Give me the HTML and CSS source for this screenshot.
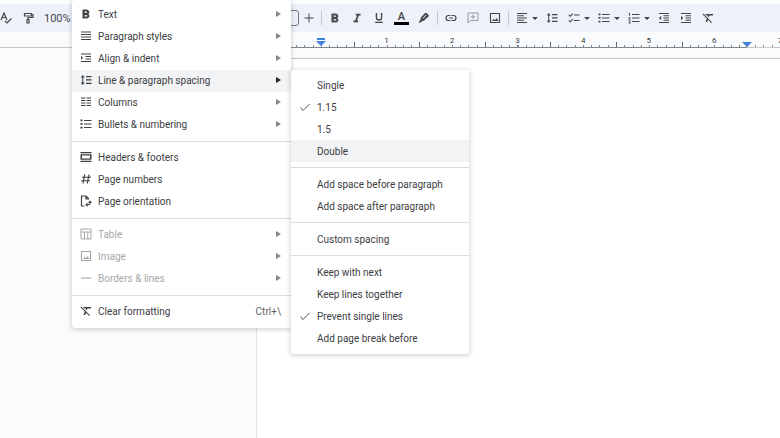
FILE: index.html
```html
<!DOCTYPE html>
<html lang="en">
<head>
  <meta charset="UTF-8" />
  <meta name="viewport" content="width=device-width, initial-scale=1.0"/>
  <title>Document editor</title>
  <link rel="stylesheet" href="styles.css">
</head>
<body>
  <!-- shared icon shapes -->
  <svg class="sprite" aria-hidden="true">
    <symbol id="bold" viewBox="2 1 20 20"><path d="M15.6 10.8c1-.7 1.6-1.8 1.6-2.8 0-2.3-1.8-4-4-4H6.500v14h7.100c2.100 0 3.700-1.700 3.700-3.800 0-1.500-.9-2.800-1.700-3.400zM9.500 6.500h3a1.500 1.500 0 0 1 0 3h-3zm3.500 9H9.500v-3H13a1.500 1.500 0 0 1 0 3z" stroke="currentColor" stroke-width=".6"/></symbol>
    <symbol id="italic" viewBox="2 1 20 20"><path d="M10 4v3h2.200l-3.400 8H6v3h8v-3h-2.200l3.400-8H18V4z"/></symbol>
    <symbol id="underline" viewBox="1 1 22 22"><path d="M12 17a6 6 0 0 0 6-6V3h-2.500v8a3.500 3.500 0 0 1-7 0V3H6v8a6 6 0 0 0 6 6zm-7 2v2h14v-2z"/></symbol>
    <symbol id="justify" viewBox="0 0 24 24"><path d="M2 3h20v2H2zm0 5h20v2H2zm0 5h20v2H2zm0 5h20v2H2z"/></symbol>
    <symbol id="left" viewBox="0 0 24 24"><path d="M2 2h20v2H2zm0 4.500h14v2H2zM2 11h20v2H2zm0 4.500h14v2H2zM2 20h20v2H2z"/></symbol>
    <symbol id="indent" viewBox="0 0 24 24"><path d="M2 3h20v2H2zm9 5h11v2H11zm0 5h11v2H11zm-9 5h20v2H2zM2 7.500v8l4-4z" /></symbol>
    <symbol id="indent-more" viewBox="0 0 24 24"><path d="M2 2h20v2H2zm9 4.500h11v2H11zm0 4.500h11v2H11zm0 4.500h11v2H11zM2 20h20v2H2zM2 7.500v9L6.500 12z"/></symbol>
    <symbol id="indent-less" viewBox="0 0 24 24"><path d="M2 2h20v2H2zm9 4.500h11v2H11zm0 4.500h11v2H11zm0 4.500h11v2H11zM2 20h20v2H2zM6.500 7.500v9L2 12z"/></symbol>
    <symbol id="spacing" viewBox="0 0 24 24"><path d="M6.500 7h3L5.500 2 1.500 7h3v10h-3l4 5 4-5h-3zM12 4v2.500h11V4zm0 16h11v-2.500H12zm0-6.800h11v-2.500H12z"/></symbol>
    <symbol id="columns" viewBox="0 0 24 24"><path d="M2 3h9v2H2zm0 5h9v2H2zm0 5h9v2H2zm0 5h9v2H2zM13 3h9v2h-9zm0 5h9v2h-9zm0 5h9v2h-9zm0 5h9v2h-9z"/></symbol>
    <symbol id="bullets" viewBox="0 0 24 24"><path d="M1 3h4v3.500H1zm0 7.200h4v3.500H1zm0 7.300h4V21H1zM8 4h15v2H8zm0 7h15v2H8zm0 7h15v2H8z"/></symbol>
    <symbol id="numbers" viewBox="0 0 24 24"><path d="M1 2h3v6H2.500V3.500H1zm0 8h4v1.500L2.800 14H5v1.500H1V14l2.200-2.500H1zm0 7h4v6H1v-1.300h2.500v-1H2v-1.300h1.500v-1H1zM8 4h15v2H8zm0 7h15v2H8zm0 7h15v2H8z"/></symbol>
    <symbol id="checklist" viewBox="0 0 24 24"><path d="M12 5h11v2H12zm0 11h11v2H12zM4.500 10 .8 6.300l1.400-1.400 2.300 2.300L9.300 2.400l1.400 1.400zm0 11L.8 17.300l1.400-1.400 2.300 2.300 4.800-4.800 1.400 1.400z"/></symbol>
    <symbol id="headers" viewBox="0 0 24 24"><path d="M1 2h22v2.500H1zm0 17.500h22V22H1zM1 6.500h22v11H1zM4 9v6h16V9z" fill-rule="evenodd"/></symbol>
    <symbol id="hash" viewBox="0 0 24 24"><path d="M9.500 3 6 21M18 3l-3.500 18M4 8.500h18M2 15.500h18" fill="none" stroke="currentColor" stroke-width="2.400"/></symbol>
    <symbol id="orientation" viewBox="0 0 24 24"><path d="M9 22H3V2h9l5 5v2M12 2v6h5M12 19.500h5a3 3 0 0 0 3-3V13" fill="none" stroke="currentColor" stroke-width="2.400"/><path d="M15 15v9l-4.500-4.500zM15.500 15.500h9L20 11z"/></symbol>
    <symbol id="table" viewBox="0 0 24 24"><path d="M2 2h20v20H2zM2 8h20M9 8v14M15.500 8v14" fill="none" stroke="currentColor" stroke-width="2"/></symbol>
    <symbol id="image" viewBox="0 0 24 24"><path d="M3 3h18v18H3z" fill="none" stroke="currentColor" stroke-width="2.200"/><path d="m6 18 3.500-4.500 2.500 3 3.500-4.500L19 18z"/></symbol>
    <symbol id="line" viewBox="0 0 24 24"><path d="M2 11h20v2.200H2z"/></symbol>
    <symbol id="clear" viewBox="0 0 24 24"><path d="M6 4h16v3h-7l-1.500 3.500-2-2L12 7H9zM2.500 3 1 4.500l8.500 8.500L7 20h3.300l1.700-4.500 6.500 6.500 1.500-1.500z"/></symbol>
    <symbol id="link" viewBox="0 0 24 24"><path d="M11 7H7a5 5 0 0 0 0 10h4M13 7h4a5 5 0 0 1 0 10h-4M8 12h8" fill="none" stroke="currentColor" stroke-width="2.400"/></symbol>
    <symbol id="comment" viewBox="0 0 24 24"><path d="M2 22V2h20v15H7zM12 5v9M7.500 9.500h9" fill="none" stroke="currentColor" stroke-width="2"/></symbol>
    <symbol id="pen" viewBox="0 0 24 24"><path d="m5 12 9-10q1.500-1.500 3 0l4 4q1.500 1.500 0 3l-10 9H6z"/><path d="m5 15 3 3-2 3H1z"/><path d="m10 13 6-7" stroke="#edf2fa" stroke-width="2"/></symbol>
    <symbol id="roller" viewBox="0 0 24 24"><path d="M5 3h14v5H5zM19 5h3v6H12v4M10 15h4v7h-4z" fill="none" stroke="currentColor" stroke-width="2.400"/></symbol>
    <symbol id="spell" viewBox="0 0 24 24"><path d="M2 16 8 2l6 14M4.500 11h7M10 18l4 4 9-9" fill="none" stroke="currentColor" stroke-width="2.400"/></symbol>
    <symbol id="plus" viewBox="0 0 24 24"><path d="M11 3h2v8h8v2h-8v8h-2v-8H3v-2h8z"/></symbol>
    <symbol id="check" viewBox="0 0 24 24"><path d="m3 13 5 6L21 6" fill="none" stroke="currentColor" stroke-width="1.800"/></symbol>
  </svg>

  <header class="toolbar">
    <div class="tools tools-start">
      <button class="tool" aria-label="Spelling"><svg><use href="#spell"/></svg></button>
      <button class="tool" aria-label="Paint format"><svg><use href="#roller"/></svg></button>
      <button class="zoom">100%</button>
    </div>
    <div class="tools tools-format">
      <input class="font-size" type="text" aria-label="Font size">
      <button class="tool size-up" aria-label="Increase font size"><svg><use href="#plus"/></svg></button>
      <span class="separator"></span>
      <button class="tool" aria-label="Bold"><svg><use href="#bold"/></svg></button>
      <button class="tool" aria-label="Italic"><svg><use href="#italic"/></svg></button>
      <button class="tool" aria-label="Underline"><svg><use href="#underline"/></svg></button>
      <button class="tool text-color" aria-label="Text color">A</button>
      <button class="tool" aria-label="Highlight color"><svg><use href="#pen"/></svg></button>
      <span class="separator"></span>
      <button class="tool" aria-label="Insert link"><svg><use href="#link"/></svg></button>
      <button class="tool faded" aria-label="Add comment"><svg><use href="#comment"/></svg></button>
      <button class="tool" aria-label="Insert image"><svg><use href="#image"/></svg></button>
      <span class="separator"></span>
      <button class="tool drop" aria-label="Align"><svg><use href="#left"/></svg></button>
      <button class="tool" aria-label="Line spacing"><svg><use href="#spacing"/></svg></button>
      <button class="tool drop" aria-label="Checklist"><svg><use href="#checklist"/></svg></button>
      <button class="tool drop" aria-label="Bulleted list"><svg><use href="#bullets"/></svg></button>
      <button class="tool drop" aria-label="Numbered list"><svg><use href="#numbers"/></svg></button>
      <button class="tool" aria-label="Decrease indent"><svg><use href="#indent-less"/></svg></button>
      <button class="tool" aria-label="Increase indent"><svg><use href="#indent-more"/></svg></button>
      <button class="tool" aria-label="Clear formatting"><svg><use href="#clear"/></svg></button>
    </div>
  </header>

  <div class="ruler">
    <div class="inches">
      <span class="inch"><i class="marker marker-left"></i></span>
      <span class="inch">1</span>
      <span class="inch">2</span>
      <span class="inch">3</span>
      <span class="inch">4</span>
      <span class="inch">5</span>
      <span class="inch">6</span>
      <span class="inch outside">7</span>
      <i class="marker marker-right"></i>
    </div>
  </div>

  <main class="workspace">
    <div class="page"></div>
  </main>

  <div class="menu format-menu" role="menu">
    <button class="item" role="menuitem"><svg><use href="#bold"/></svg><span>Text</span><i class="arrow"></i></button>
    <button class="item" role="menuitem"><svg><use href="#justify"/></svg><span>Paragraph styles</span><i class="arrow"></i></button>
    <button class="item" role="menuitem"><svg><use href="#indent"/></svg><span>Align &amp; indent</span><i class="arrow"></i></button>
    <button class="item active" role="menuitem"><svg><use href="#spacing"/></svg><span>Line &amp; paragraph spacing</span><i class="arrow"></i></button>
    <button class="item" role="menuitem"><svg><use href="#columns"/></svg><span>Columns</span><i class="arrow"></i></button>
    <button class="item" role="menuitem"><svg><use href="#bullets"/></svg><span>Bullets &amp; numbering</span><i class="arrow"></i></button>
    <hr>
    <button class="item" role="menuitem"><svg><use href="#headers"/></svg><span>Headers &amp; footers</span></button>
    <button class="item" role="menuitem"><svg><use href="#hash"/></svg><span>Page numbers</span></button>
    <button class="item" role="menuitem"><svg><use href="#orientation"/></svg><span>Page orientation</span></button>
    <hr>
    <button class="item" role="menuitem" disabled><svg><use href="#table"/></svg><span>Table</span><i class="arrow"></i></button>
    <button class="item" role="menuitem" disabled><svg><use href="#image"/></svg><span>Image</span><i class="arrow"></i></button>
    <button class="item" role="menuitem" disabled><svg><use href="#line"/></svg><span>Borders &amp; lines</span><i class="arrow"></i></button>
    <hr>
    <button class="item" role="menuitem"><svg><use href="#clear"/></svg><span>Clear formatting</span><kbd>Ctrl+\</kbd></button>
  </div>

  <div class="menu spacing-menu" role="menu">
    <button class="item" role="menuitem"><svg></svg><span>Single</span></button>
    <button class="item" role="menuitem"><svg><use href="#check"/></svg><span>1.15</span></button>
    <button class="item" role="menuitem"><svg></svg><span>1.5</span></button>
    <button class="item active" role="menuitem"><svg></svg><span>Double</span></button>
    <hr>
    <button class="item" role="menuitem"><svg></svg><span>Add space before paragraph</span></button>
    <button class="item" role="menuitem"><svg></svg><span>Add space after paragraph</span></button>
    <hr>
    <button class="item" role="menuitem"><svg></svg><span>Custom spacing</span></button>
    <hr>
    <button class="item" role="menuitem"><svg></svg><span>Keep with next</span></button>
    <button class="item" role="menuitem"><svg></svg><span>Keep lines together</span></button>
    <button class="item" role="menuitem"><svg><use href="#check"/></svg><span>Prevent single lines</span></button>
    <button class="item" role="menuitem"><svg></svg><span>Add page break before</span></button>
  </div>
</body>
</html>
```
FILE: styles.css
```css
* {
  box-sizing: border-box;
}

body {
  margin: 0;
  min-height: 100vh;
  display: flex;
  flex-direction: column;
  overflow: hidden;
  background-color: #f9fbfd;
  font-family: Roboto, sans-serif;
  font-size: 10px;
  color: #3c4043;
}

button {
  border: 0;
  padding: 0;
  background: none;
  font: inherit;
  color: inherit;
}

svg {
  width: 12px;
  height: 12px;
  flex-shrink: 0;
  fill: currentColor;
}

.sprite {
  position: absolute;
  width: 0;
  height: 0;
}

/* toolbar */
.toolbar {
  display: flex;
  height: 28px;
  margin-top: 4px;
  background-color: #edf2fa;
  color: #444746;
}

.tools {
  display: flex;
  align-items: center;
}

.tools-start {
  flex: 0 0 281px;
  gap: 10px;
}

.tool {
  display: flex;
  align-items: center;
  justify-content: center;
  width: 22px;
  height: 22px;
}

.tools-start .tool {
  width: 12px;
}

.tools .size-up {
  width: 20px;
}

.zoom {
  font-size: 11px;
}

.font-size {
  width: 18px;
  height: 16px;
  border: 1px solid #747775;
  border-radius: 3px;
  background: none;
}

.separator {
  width: 1px;
  height: 14px;
  margin: 0 2px;
  background-color: #c7c7c7;
}

.text-color {
  width: 15px;
  height: 14px;
  margin: 0 4px;
  border-bottom: 3px solid #000;
  font-size: 11px;
  font-weight: 500;
}

.faded {
  opacity: 0.5;
}

.drop {
  width: 30px;
  gap: 4px;
  padding-left: 2px;
}

.drop::after {
  content: "";
  border: 3px solid transparent;
  border-top-color: #444746;
  border-bottom: 0;
}

/* ruler */
.ruler {
  height: 16px;
  padding-left: 288px;
  border-bottom: 1px solid #c4c7c5;
}

.inches {
  position: relative;
  display: flex;
  height: 16px;
  overflow: hidden;
}

/* each cell runs from one half inch mark to the next */
.inch {
  display: flex;
  justify-content: center;
  flex: 0 0 calc(100% / 7.5);
  height: 16px;
  border-bottom: 1px solid #80868b;
  background:
    linear-gradient(#5f6368, #5f6368) left bottom / 1px 5px no-repeat,
    repeating-linear-gradient(to right, #80868b 0 1px, transparent 1px calc(100% / 8)) left bottom / 100% 2px no-repeat;
  font-size: 8px;
  line-height: 18px;
}

.inch.outside {
  border-bottom-color: #c4c7c5;
}

.marker {
  height: 5px;
  border: 5px solid transparent;
  border-top-color: #3f80dc;
  border-bottom: 0;
}

.marker-left {
  position: relative;
  margin-top: 9px;
}

.marker-left::before {
  content: "";
  position: absolute;
  left: -4px;
  top: -8px;
  width: 8px;
  height: 2px;
  background-color: #3f80dc;
}

.marker-right {
  position: absolute;
  left: calc(100% * 7 / 7.5 - 5px);
  top: 10px;
}

/* document */
.workspace {
  flex: 1;
  padding: 10px 0 0 256px;
}

.page {
  height: 100%;
  min-height: 380px;
  border-top: 1px solid #c4c7c5;
  border-left: 1px solid #e1e3e6;
  background-color: #fff;
}

/* menus */
.menu {
  position: absolute;
  padding: 4px 0 5px;
  background-color: #fff;
  border-radius: 3px;
  box-shadow: 0 1px 4px 1px rgba(60, 64, 67, 0.2);
}

.menu hr {
  height: 1px;
  margin: 5px 0;
  border: 0;
  background-color: #dadce0;
}

.format-menu {
  top: 0;
  left: 72px;
  width: 219px;
}

.spacing-menu {
  top: 70px;
  left: 291px;
  width: 178px;
}

.item {
  display: flex;
  align-items: center;
  gap: 6px;
  width: 100%;
  height: 22px;
  padding: 0 10px 0 8px;
  text-align: left;
}

.format-menu .item {
  padding-bottom: 2px;
}

.item span {
  flex: 1;
}

.item.active {
  background-color: #f1f3f4;
}

.item:disabled {
  color: #a5a8ab;
}

.item kbd {
  font: inherit;
  color: #5f6368;
}

.arrow {
  border: 3px solid transparent;
  border-left: 5px solid #80868b;
  border-right: 0;
}

.active .arrow {
  border-left-color: #202124;
}
```
